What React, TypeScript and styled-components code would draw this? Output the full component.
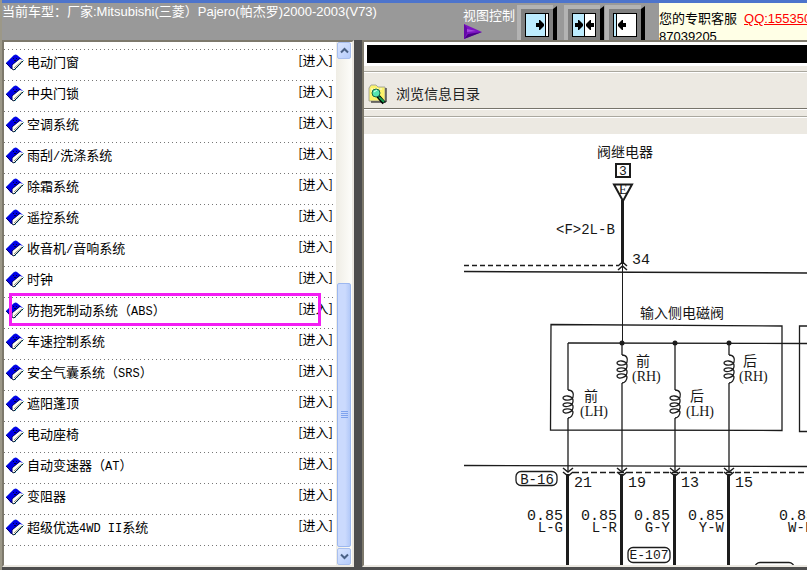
import React from "react";
import styled, { createGlobalStyle } from "styled-components";

const SANS = '"Liberation Sans", "Noto Sans CJK SC", sans-serif';

const GlobalStyle = createGlobalStyle`
  *, *::before, *::after { box-sizing: border-box; }
  body { margin: 0; background: #4e4e4e; font: 13px/16px ${SANS}; color: #000; }
  button { padding: 0; border: 0; background: none; font: inherit; cursor: pointer; }
  svg { display: block; }
`;

const Page = styled.div`
  display: flex;
  flex-direction: column;
  height: 100vh;
  overflow: hidden;
  border-left: 2px solid #9c9888;
`;

const Header = styled.header`
  display: flex;
  flex: 0 0 40px;
  overflow: hidden;
  border-top: 3px solid #4d74cc;
  background: #999;
  color: #fff;
  white-space: nowrap;
`;

const CarTitle = styled.h1`
  flex: 1 1 0;
  min-width: 0;
  margin: 0;
  font-size: 13px;
  font-weight: 400;
  line-height: 18px;
`;

const ViewControl = styled.div`
  display: flex;
  flex: 0 0 196px;
`;

const ViewLabel = styled.div`
  width: 54px;
  padding-top: 5px;
  line-height: 16px;
`;

const ViewButtons = styled.div`
  display: flex;
  padding-top: 2px;
`;

const ViewButton = styled.button<{ $gap?: number }>`
  flex: none;
  width: 40px;
  height: 36px;
  margin-right: ${(p) => p.$gap ?? 0}px;
`;

const Contact = styled.div`
  flex: 0 0 148px;
  overflow: hidden;
  padding-top: 7px;
  background: #ffffe6;
  color: #000;
  line-height: 18px;
`;

const ContactLink = styled.a`
  margin-left: 7px;
  color: #f00;
`;

const Frames = styled.main`
  display: grid;
  flex: 1;
  min-height: 0;
  grid-template-columns: 352px minmax(0, 1fr);
  gap: 8px;
  padding-bottom: 3px;
  background: #4e4e4e;
`;

const Frame = styled.section`
  display: flex;
  min-width: 0;
  min-height: 0;
  overflow: hidden;
  border: 2px solid #ece9e2;
  border-top-color: #7d796c;
  border-left-color: #7d796c;
  background: #fff;
`;

const InfoFrame = styled(Frame)`
  flex-direction: column;
  border-right: 0;
`;

const SystemList = styled.ul`
  flex: 1;
  min-width: 0;
  margin: 0;
  padding: 7px 3px 0 0;
  overflow: hidden;
  list-style: none;
`;

const SystemRow = styled.li`
  position: relative;
  display: flex;
  align-items: flex-start;
  height: 31px;
  background: repeating-linear-gradient(90deg, #777 0 1px, transparent 1px 4px) top / 100% 1px no-repeat;
`;

const RowEnd = styled(SystemRow)`
  height: 1px;
`;

const BookSlot = styled.span`
  flex: 0 0 23px;
  padding: 5px 0 0 1px;
`;

const SystemName = styled.span`
  flex: 1;
  padding-top: 6px;
  white-space: pre;
`;

const Latin = styled.span`
  font-family: "Liberation Mono", monospace;
  font-size: 12px;
`;

const EnterLink = styled.a`
  padding-top: 3px;
  color: #000;
  font-family: "Noto Sans CJK SC", sans-serif;
  text-decoration: none;
`;

const Highlight = styled.span`
  position: absolute;
  inset: -4px 12px 2px 5px;
  border: 3px solid #f31df3;
  pointer-events: none;
`;

const Scrollbar = styled.div`
  display: flex;
  flex: 0 0 16px;
  flex-direction: column;
  padding: 0 1px;
  background: linear-gradient(90deg, #efede5, #fdfdfa);
`;

const ScrollButton = styled.button`
  display: grid;
  flex: 0 0 17px;
  place-items: center;
  border: 1px solid #a9bfee;
  border-radius: 2px;
  background: linear-gradient(135deg, #dbe6ff, #b5ccfb);
`;

const Track = styled.div`
  display: flex;
  flex: 1;
  flex-direction: column;
  min-height: 0;
`;

const TrackGap = styled.div`
  flex: 224;
`;

const Thumb = styled.div`
  display: grid;
  flex: 263;
  place-items: center;
  margin-bottom: 1px;
  border: 1px solid #9db8f0;
  border-radius: 2px;
  background: linear-gradient(90deg, #cbdafd 0 60%, #b3c9f8);
`;

const Banner = styled.div`
  flex: 0 0 18px;
  margin: 3px 0 3px 3px;
  background: #000;
`;

const Ridge = styled.div<{ $height: number; $dark?: boolean }>`
  flex: 0 0 ${(p) => p.$height}px;
  border-bottom: 1px solid #fff;
  background: #ece9e2;
  box-shadow: inset 0 -1px ${(p) => (p.$dark ? "#77746b" : "#aaa89f")};
`;

const Toolbar = styled(Ridge)`
  display: flex;
  align-items: center;
  gap: 9px;
  padding: 6px 0 0 4px;
`;

const ToolbarTitle = styled.h2`
  margin: 0;
  color: #222;
  font-size: 14px;
  font-weight: 400;
  line-height: 20px;
`;

const Spacer = styled.div`
  flex: 0 0 16px;
  background: #ece9e2;
`;

const DiagramArea = styled.div`
  flex: 1;
  min-height: 0;
  overflow: hidden;
`;

const Diagram = styled.svg`
  fill: none;
  stroke: #1c1c1c;
  stroke-width: 1;

  text {
    fill: #161616;
    stroke: none;
    font-family: "Liberation Mono", "Noto Sans CJK SC", monospace;
    font-size: 15px;
  }
  .cjk { font-family: "Noto Sans CJK SC", sans-serif; font-size: 14px; }
  .side { font-family: "Liberation Serif", "Noto Sans CJK SC", serif; font-size: 14px; }
  .code { font-size: 14px; }
  .tag { font-size: 13px; }
  .end { text-anchor: end; }
  .mid { text-anchor: middle; }
`;

const BookIcon = () => (
  <svg width="20" height="18" viewBox="0 0 20 18" aria-hidden="true">
    <path d="M1 9 L8 2 Q10 0 12 1 L18 6 L8 14 L6 15 Z" fill="#0000e8" />
    <path d="M1 9l7-7q2-2 4-1" stroke="#5a7cd8" fill="none" strokeDasharray="1 1" />
    <path d="M7 11 L15 5 L18 6 L18 8 L9 16 L7 15 Z" fill="#fffff0" />
    <path d="M1 9 L7 15 V11 L15 4" stroke="#000070" fill="none" />
    <path d="M7 15 L9 16 L18 7" stroke="#001030" fill="none" />
    <path d="M9 14 L17 7" stroke="#8c8c78" />
    <path d="M8 4h1v1h-1zM11 4h1v1h-1zM9 6h2v1h-2z" fill="#000040" />
    <path d="M19 6l-9 10" stroke="#18a0b0" strokeDasharray="1 2" fill="none" />
  </svg>
);

type View = "right" | "split" | "left";

const arrowRight = "M0 -2H3V-5H4L8 -1V1L4 5H3V2H0Z";
const arrowLeft = "M8 -2H5V-5H4L0 -1V1L4 5H5V2H8Z";

const ViewIcon = ({ view }: { view: View }) => (
  <svg width="40" height="36" viewBox="0 0 40 36" aria-hidden="true">
    <rect width="36" height="36" fill="#b3b3b3" />
    <path d="M4 4H36V36H4Z" fill="#808080" />
    <path d="M36 4L40 1V36H36Z" fill="#000" />
    <rect x="8.5" y="8.5" width="23" height="23" fill="#fff" stroke="#000" />
    {view === "right" && (
      <>
        <path d="M9 9H28V31H9Z" fill="#bdecff" />
        <path d="M28.5 9V31" stroke="#000" />
        <path d={arrowRight} transform="translate(19 20)" />
      </>
    )}
    {view === "split" && (
      <>
        <path d="M9 9H20V31H9Z" fill="#bdecff" />
        <path d="M20.5 9V31" stroke="#000" />
        <path d={arrowRight} transform="translate(11 20)" />
        <path d={arrowLeft} transform="translate(22 20)" />
      </>
    )}
    {view === "left" && (
      <>
        <path d="M9 9H11V31H9Z" fill="#bdecff" />
        <path d="M11.5 9V31" stroke="#000" />
        <path d={arrowLeft} transform="translate(13 20)" />
      </>
    )}
  </svg>
);

const PlayIcon = () => (
  <svg width="20" height="15" viewBox="0 0 20 15" aria-hidden="true">
    <path d="M1 0 L19 8 L1 15Z" fill="#7c14c2" />
    <path d="M1 0 L4 4 V9 L1 15Z" fill="#6408a8" />
    <path d="M4 5 L13 7 L4 8Z" fill="#a648de" />
    <path d="M1 15 L19 8 L5 10Z" fill="#480086" />
  </svg>
);

const FolderSearchIcon = () => (
  <svg width="19" height="21" viewBox="0 0 19 21" aria-hidden="true">
    <path d="M1 4 L3 1 H8 L10 3 H17 V17 H1 Z" fill="#fbf36a" stroke="#a8a89c" />
    <path d="M18 4V18H3" stroke="#000" fill="none" />
    <path d="M3 5H15M3 7H6" stroke="#fffde0" strokeDasharray="2 1" />
    <path d="M10 12 L16 19" stroke="#000" strokeWidth="4" />
    <path d="M11 13 L16 18" stroke="#16a050" strokeWidth="2" />
    <circle cx="8" cy="9" r="4" fill="#55e5b0" stroke="#17664a" />
    <path d="M6 8L9 6" stroke="#d8fff0" />
  </svg>
);

const Chevron = ({ up }: { up?: boolean }) => (
  <svg width="9" height="7" viewBox="0 0 9 7" aria-hidden="true">
    <path d={up ? "M1 5.5L4.5 2L8 5.5" : "M1 1.5L4.5 5L8 1.5"} fill="none" stroke="#4a6185" strokeWidth="2" />
  </svg>
);

const Coil = ({ x, y }: { x: number; y: number }) => (
  <g transform={`translate(${x} ${y})`} strokeWidth="1.3">
    <path d="M0 0C5 0 6 4 5 7C4 11 -5 11 -5 8C-5 5 4 5 5 10C6 17 -5 18 -5 15C-5 12 4 12 5 16C6 23 -5 25 -5 21C-5 18 4 18 5 22C5 25 3 28 0 28" />
  </g>
);

const wires = [
  { x: 568, coil: 390, side: "前", tag: "(LH)", labelX: 584, pin: "21", color: "L-G" },
  { x: 622, coil: 355, side: "前", tag: "(RH)", labelX: 636, pin: "19", color: "L-R" },
  { x: 675, coil: 390, side: "后", tag: "(LH)", labelX: 690, pin: "13", color: "G-Y" },
  { x: 729, coil: 355, side: "后", tag: "(RH)", labelX: 743, pin: "15", color: "Y-W" },
];

const WiringDiagram = () => (
  <Diagram width="443" height="431" viewBox="364 134 443 431" role="img" aria-label="输入侧电磁阀电路图">
    <text x="625" y="157" className="cjk mid">阀继电器</text>
    <rect x="616" y="164" width="14" height="13" strokeWidth="2" />
    <text x="623" y="175" className="tag mid">3</text>
    <path d="M614 184.5H632L623 201Z" strokeWidth="2" />
    <text x="623" y="194" className="side mid">E</text>
    <path d="M622.5 200V264" strokeWidth="3" />
    <text x="556" y="234" className="code">&lt;F&gt;2L-B</text>
    <text x="632" y="264">34</text>
    <path d="M464 265.5H618" strokeDasharray="5 3" strokeWidth="1.5" />
    <path d="M464 271.5L807 273" strokeWidth="1.5" />
    <path d="M618 266L622.5 262L627 266M618 270L622.5 266L627 270" strokeWidth="1.5" />
    <path d="M622.5 264V343" />

    <text x="682" y="318" className="cjk mid">输入侧电磁阀</text>
    <path d="M551 324.5L782 326V430.5L550.5 430Z" strokeWidth="1.3" />
    <path d="M807 326H799.5V431.5H807" strokeWidth="1.3" />
    <path d="M568 343L807 343.5" strokeWidth="1.3" />
    <path d="M464 465.5L807 466.5" strokeWidth="1.3" />
    <path d="M573 472.5H807" strokeDasharray="6 3" strokeWidth="1.5" />

    {wires.map((w) => (
      <g key={w.pin}>
        {w.x !== 568 && <circle cx={w.x} cy="343" r="2.5" fill="#1c1c1c" stroke="none" />}
        <path d={`M${w.x} 343V${w.coil}M${w.x} ${w.coil + 28}V472`} strokeWidth="1.3" />
        <Coil x={w.x} y={w.coil} />
        <text x={w.labelX} y={w.coil + 11} className="cjk">{w.side}</text>
        <text x={w.labelX - 4} y={w.coil + 26} className="side">{w.tag}</text>
        <path d={`M${w.x - 5} 468l5 4l5 -4m-10 4l5 4l5 -4`} strokeWidth="1.5" />
        <path d={`M${w.x - 0.5} 474V565`} strokeWidth="3" />
        <text x={w.x + 6} y="487">{w.pin}</text>
        <text x={w.x - 5} y="520" className="end">0.85</text>
        <text x={w.x - 5} y="532" className="code end">{w.color}</text>
      </g>
    ))}

    <text x="779" y="520">0.85</text>
    <text x="788" y="532" className="code">W-L</text>
    <rect x="516" y="471.5" width="41" height="14" rx="5" strokeWidth="1.3" />
    <text x="537" y="484" className="code mid">B-16</text>
    <rect x="628" y="547.5" width="42" height="15" rx="5" fill="#fff" strokeWidth="1.3" />
    <text x="649" y="559" className="tag mid">E-107</text>
    <rect x="755" y="562.5" width="39" height="15" rx="5" strokeWidth="1.3" />
  </Diagram>
);

const systems: { name: string; latin?: string; rest?: string; marked?: boolean }[] = [
  { name: "电动门窗" },
  { name: "中央门锁" },
  { name: "空调系统" },
  { name: "雨刮", latin: "/", rest: "洗涤系统" },
  { name: "除霜系统" },
  { name: "遥控系统" },
  { name: "收音机", latin: "/", rest: "音响系统" },
  { name: "时钟" },
  { name: "防抱死制动系统（", latin: "ABS", rest: "）", marked: true },
  { name: "车速控制系统" },
  { name: "安全气囊系统（", latin: "SRS", rest: "）" },
  { name: "遮阳蓬顶" },
  { name: "电动座椅" },
  { name: "自动变速器（", latin: "AT", rest: "）" },
  { name: "变阻器" },
  { name: "超级优选", latin: "4WD II", rest: "系统" },
];

export default function App() {
  return (
    <Page>
      <GlobalStyle />
      <Header>
        <CarTitle>当前车型：厂家:Mitsubishi(三菱）Pajero(帕杰罗)2000-2003(V73)</CarTitle>
        <ViewControl>
          <ViewLabel>
            视图控制
            <PlayIcon />
          </ViewLabel>
          <ViewButtons>
            <ViewButton aria-label="左侧展开" $gap={7}><ViewIcon view="right" /></ViewButton>
            <ViewButton aria-label="左右分栏" $gap={1}><ViewIcon view="split" /></ViewButton>
            <ViewButton aria-label="右侧展开"><ViewIcon view="left" /></ViewButton>
          </ViewButtons>
        </ViewControl>
        <Contact>
          您的专职客服<ContactLink href="#qq">QQ:155350</ContactLink>
          <br />
          87039205
        </Contact>
      </Header>
      <Frames>
        <Frame>
          <SystemList>
            {systems.map((s) => (
              <SystemRow key={s.name}>
                <BookSlot><BookIcon /></BookSlot>
                <SystemName>
                  {s.name}
                  {s.latin && <Latin>{s.latin}</Latin>}
                  {s.rest}
                </SystemName>
                <EnterLink href="#enter">[进入]</EnterLink>
                {s.marked && <Highlight />}
              </SystemRow>
            ))}
            <RowEnd aria-hidden="true" />
          </SystemList>
          <Scrollbar>
            <ScrollButton aria-label="向上滚动"><Chevron up /></ScrollButton>
            <Track>
              <TrackGap />
              <Thumb>
                <svg width="7" height="8" viewBox="0 0 7 8" aria-hidden="true">
                  <path d="M0 .5H7M0 2.5H7M0 4.5H7M0 6.5H7" stroke="#7fa3ee" />
                </svg>
              </Thumb>
            </Track>
            <ScrollButton aria-label="向下滚动"><Chevron /></ScrollButton>
          </Scrollbar>
        </Frame>
        <InfoFrame>
          <Banner />
          <Ridge $height={7} />
          <Toolbar $height={37} $dark>
            <FolderSearchIcon />
            <ToolbarTitle>浏览信息目录</ToolbarTitle>
          </Toolbar>
          <Ridge $height={8} />
          <Spacer />
          <DiagramArea><WiringDiagram /></DiagramArea>
        </InfoFrame>
      </Frames>
    </Page>
  );
}
